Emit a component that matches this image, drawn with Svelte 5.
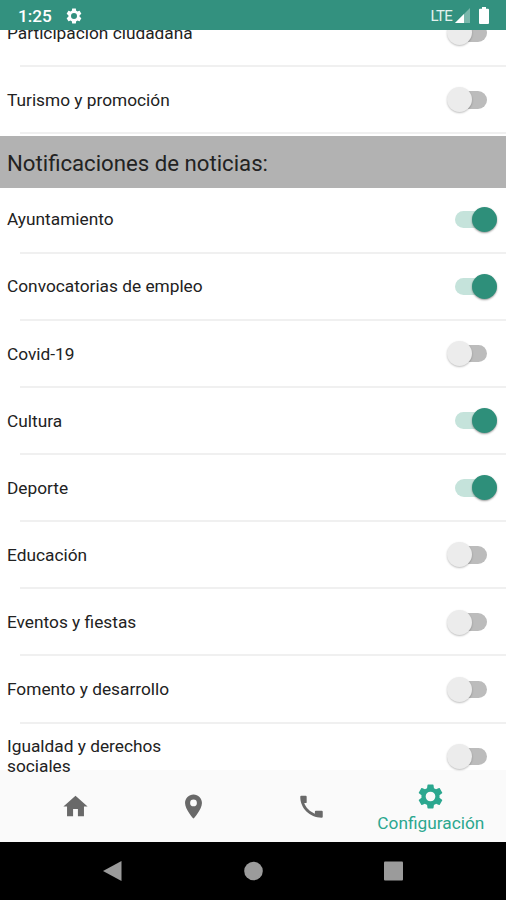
<script lang="ts">
  interface Item {
    label: string;
    on: boolean;
  }

  let events: Item[] = $state([
    { label: 'Participación ciudadana', on: false },
    { label: 'Turismo y promoción', on: false }
  ]);

  let news: Item[] = $state([
    { label: 'Ayuntamiento', on: true },
    { label: 'Convocatorias de empleo', on: true },
    { label: 'Covid-19', on: false },
    { label: 'Cultura', on: true },
    { label: 'Deporte', on: true },
    { label: 'Educación', on: false },
    { label: 'Eventos y fiestas', on: false },
    { label: 'Fomento y desarrollo', on: false },
    { label: 'Igualdad y derechos sociales', on: false }
  ]);

  const GEAR =
    'M19.43 12.98c.04-.32.07-.64.07-.98s-.03-.66-.07-.98l2.11-1.65c.19-.15.24-.42.12-.64l-2-3.46c-.12-.22-.39-.3-.61-.22l-2.49 1c-.52-.4-1.08-.73-1.69-.98l-.38-2.65C14.46 2.18 14.25 2 14 2h-4c-.25 0-.46.18-.49.42l-.38 2.65c-.61.25-1.17.59-1.69.98l-2.49-1c-.23-.09-.49 0-.61.22l-2 3.46c-.13.22-.07.49.12.64l2.11 1.65c-.04.32-.07.65-.07.98s.03.66.07.98l-2.11 1.65c-.19.15-.24.42-.12.64l2 3.46c.12.22.39.3.61.22l2.49-1c.52.4 1.08.73 1.69.98l.38 2.65c.03.24.24.42.49.42h4c.25 0 .46-.18.49-.42l.38-2.65c.61-.25 1.17-.59 1.69-.98l2.49 1c.23.09.49 0 .61-.22l2-3.46c.12-.22.07-.49-.12-.64l-2.11-1.65zM12 16a4 4 0 1 1 0-8 4 4 0 0 1 0 8z';

  const tabs = [
    { name: 'Inicio', path: 'M10 20v-6h4v6h5v-8h3L12 3 2 12h3v8z' },
    {
      name: 'Mapa',
      path: 'M12 2C8.13 2 5 5.13 5 9c0 5.25 7 13 7 13s7-7.75 7-13c0-3.87-3.13-7-7-7zm0 9.8a2.8 2.8 0 1 1 0-5.6 2.8 2.8 0 0 1 0 5.600z'
    },
    {
      name: 'Teléfono',
      path: 'M3.500 3.200h3.700q.8 0 .8.8v4.500q0 .7-.7.7H6c1.200 3.700 4.800 7.400 8.800 8.700v-1.500q0-.8.8-.8h4.900q.8 0 .8.8v4q0 .9-.9.9C10.500 21.300 2.700 13.500 2.700 4q0-.8.8-.8z'
    }
  ];
</script>

{#snippet row(item: Item)}
  <div class="row">
    <span class="label">{item.label}</span>
    <button
      class="toggle"
      class:on={item.on}
      role="switch"
      aria-checked={item.on}
      aria-label={item.label}
      onclick={() => (item.on = !item.on)}
    >
      <span class="knob"></span>
    </button>
  </div>
{/snippet}

<div class="screen">
  <header class="status">
    <span class="time">1:25</span>
    <svg class="status-gear" viewBox="0 0 24 24" fill="currentColor"><path d={GEAR} /></svg>
    <span class="lte">LTE</span>
    <svg class="signal" viewBox="0 0 15 15">
      <path d="M0 15L15 0v15z" fill="#fff" opacity="0.35" />
      <path d="M0 15L9 6v9z" fill="#fff" />
    </svg>
    <svg class="battery" viewBox="0 0 10 17" fill="currentColor">
      <path d="M3 0h4v1.700h2q1 0 1 1V16q0 1-1 1H1q-1 0-1-1V2.700q0-1 1-1h2z" />
    </svg>
  </header>

  <main class="list">
    <div class="content">
      {#each events as item}
        {@render row(item)}
      {/each}
      <h2>Notificaciones de noticias:</h2>
      {#each news as item}
        {@render row(item)}
      {/each}
    </div>
  </main>

  <nav class="tabs">
    {#each tabs as tab}
      <button class="tab" aria-label={tab.name}>
        <svg viewBox="0 0 24 24" fill="currentColor"><path d={tab.path} /></svg>
      </button>
    {/each}
    <button class="tab active">
      <svg viewBox="0 0 24 24" fill="currentColor"><path d={GEAR} /></svg>
      <span>Configuración</span>
    </button>
  </nav>

  <footer class="system">
    <svg viewBox="0 0 20 22"><path d="M0 11L18.500 1v20z" /></svg>
    <svg viewBox="0 0 20 22"><circle cx="10.500" cy="11" r="9.300" /></svg>
    <svg viewBox="0 0 20 22"><rect x="1" y="1.500" width="19" height="19" rx="1" /></svg>
  </footer>
</div>

<style>
  :global(body) {
    margin: 0;
  }

  .screen {
    display: flex;
    flex-direction: column;
    width: 506px;
    height: 900px;
    overflow: hidden;
    background: #fff;
    color: #222;
    font-family: Roboto, sans-serif;
  }

  button {
    padding: 0;
    border: none;
    background: none;
    font: inherit;
    color: inherit;
    cursor: pointer;
  }

  .status {
    display: flex;
    align-items: center;
    flex: none;
    box-sizing: border-box;
    height: 30px;
    padding: 1px 17px 0 18px;
    background: #33917f;
    color: #fff;
  }

  .time {
    width: 47px;
    font-size: 17.2px;
    font-weight: 500;
  }

  .status-gear {
    width: 18px;
    height: 18px;
  }

  .lte {
    margin-left: auto;
    margin-right: 3px;
    font-size: 15px;
    letter-spacing: -0.7px;
    color: #e3f1ee;
  }

  .signal {
    width: 15px;
    height: 15px;
    margin-right: 9px;
  }

  .battery {
    width: 10px;
    height: 17px;
  }

  /* last row runs slightly over the tab bar */
  .list {
    position: relative;
    z-index: 1;
    flex: none;
    height: 743px;
    margin-bottom: -3px;
    overflow: hidden;
  }

  .content {
    margin-top: -30px;
  }

  .row {
    display: flex;
    align-items: center;
    justify-content: space-between;
    box-sizing: border-box;
    height: 67.150px;
    padding: 0 19px 1.500px 7px;
    background: linear-gradient(#f0f0f0, #f0f0f0) 20px 100% / 100% 2px no-repeat;
  }

  .label {
    width: 200px;
    font-size: 17.3px;
    line-height: 20px;
  }

  .row:last-child .label {
    width: 170px;
  }

  h2 {
    display: flex;
    align-items: center;
    box-sizing: border-box;
    height: 52px;
    margin: 1.700px 0 -1.500px;
    padding: 3px 7px 0;
    background: #b2b2b2;
    font-size: 22.2px;
    font-weight: 400;
  }

  .toggle {
    display: flex;
    align-items: center;
    width: 32px;
    height: 17.500px;
    border-radius: 9px;
    background: #bcbcbc;
  }

  .knob {
    flex: none;
    width: 25px;
    height: 25px;
    margin-left: -8.5px;
    border-radius: 50%;
    background: #ececec;
    box-shadow: 0 1px 2px rgba(0, 0, 0, 0.25);
  }

  .toggle.on {
    background: #c5e3db;
  }

  .toggle.on .knob {
    margin-left: 16.5px;
    background: #2e8f7a;
    box-shadow: 0 1px 2px rgba(0, 0, 0, 0.4);
  }

  .tabs {
    display: flex;
    flex: none;
    box-sizing: border-box;
    height: 72px;
    padding: 1px 16px 0;
    background: #fafafa;
  }

  .tab {
    display: flex;
    flex: 1;
    flex-direction: column;
    align-items: center;
    justify-content: center;
    color: #696969;
  }

  .tab svg {
    width: 29px;
    height: 29px;
  }

  .tab.active {
    padding: 2px 0 0 1px;
    color: #2ba78f;
  }

  .tab.active span {
    font-size: 17.3px;
    line-height: 20px;
    margin-top: 2px;
  }

  .system {
    display: flex;
    align-items: center;
    justify-content: space-between;
    flex: 1;
    padding: 0 103px;
    background: #000;
  }

  .system svg {
    width: 20px;
    height: 22px;
    fill: #9b9b9b;
  }
</style>
